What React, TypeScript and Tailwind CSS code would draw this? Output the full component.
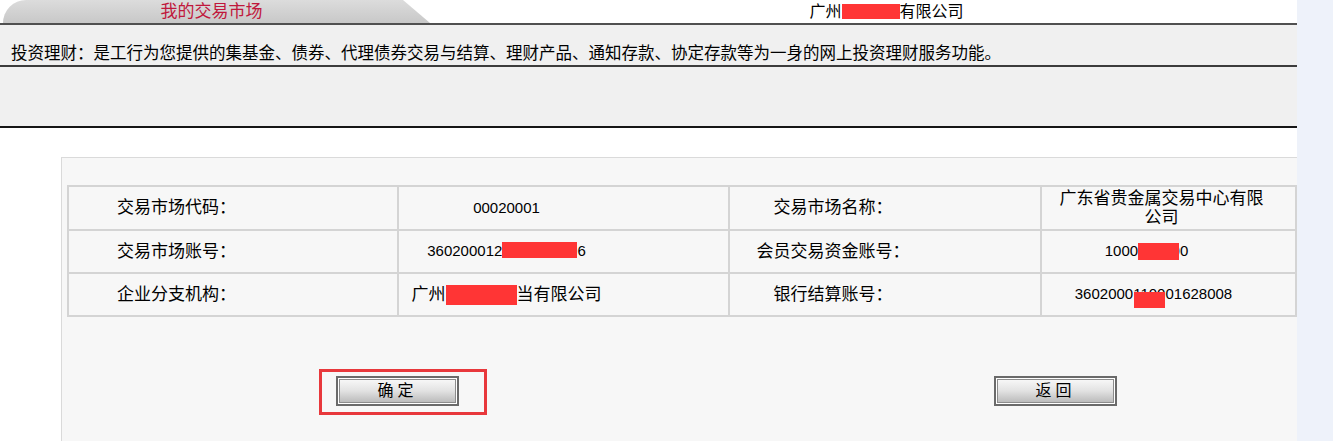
import React from "react";

const line = "border-[#d4d4d4]";

const Redact = ({ className }: { className: string }) => (
  <span className={`inline-block bg-[#ff3535] ${className}`} />
);

const Cell = ({ children, className = "" }: { children: React.ReactNode; className?: string }) => (
  <div className={`flex items-center border-r-2 border-b-2 ${line} ${className}`}>{children}</div>
);

const OldButton = ({ label }: { label: string }) => (
  <div className="w-[123px] h-[30px] border-2 border-[#6a6a6a] bg-white p-px">
    <div className="flex h-full items-center justify-center border border-[#8c8c8c] bg-linear-to-b from-[#f7f7f7] via-[#e2e2e2] to-[#bcbcbc] text-[16px] leading-none tracking-[4px] text-black">
      {label}
    </div>
  </div>
);

export default function App() {
  return (
    <div className="flex h-[441px] w-full overflow-hidden bg-[#eef2fa] font-['Liberation_Sans','Noto_Sans_CJK_SC',sans-serif] text-[17px] text-black">
      <div className="w-[1297px] shrink-0 bg-white">
        {/* tab bar */}
        <div className="flex h-[25px] border-b-2 border-[#505050]">
          <div className="ml-[3px] flex w-[427px] items-center justify-center rounded-tl-[26px] bg-linear-to-b from-[#dcdcdc] to-[#c8c8c8] pr-[10px] text-[17px] text-[#c0183c] [clip-path:polygon(0_0,400px_0,427px_100%,0_100%)]">
            我的交易市场
          </div>
          <div className="flex flex-1 items-center justify-center pl-[46px] text-[16px]">
            广州
            <Redact className="h-[15px] w-[58px]" />
            有限公司
          </div>
        </div>

        {/* description */}
        <div className="flex h-[42px] items-end border-b-2 border-[#3c3c3c] bg-[#f0f0f0] pb-[2px] pl-[11px] text-[16.5px] leading-[20px]">
          投资理财：是工行为您提供的集基金、债券、代理债券交易与结算、理财产品、通知存款、协定存款等为一身的网上投资理财服务功能。
        </div>
        <div className="h-[61px] border-b-2 border-[#161616] bg-[#f0f0f0]" />

        {/* panel */}
        <div className="ml-[61px] mt-[29px] border-l border-t border-[#dadada] bg-[#f7f7f7] pl-[5px] pt-[27px]">
          <div className={`grid grid-cols-[330px_331px_312px_1fr] border-l-2 border-t-2 ${line}`}>
            <Cell className="h-[44px] pl-[48px]">交易市场代码：</Cell>
            <Cell className="h-[44px] justify-center pr-[114px] text-[15px]">00020001</Cell>
            <Cell className="h-[44px] justify-center pr-[104px]">交易市场名称：</Cell>
            <Cell className="h-[44px] justify-center pl-[16px] pr-[30px] text-center leading-[19px]">
              广东省贵金属交易中心有限公司
            </Cell>

            <Cell className="h-[43px] pl-[48px]">交易市场账号：</Cell>
            <Cell className="h-[43px] justify-center pr-[114px] text-[15px]">
              360200012
              <span className="relative inline-block">
                000000000
                <span className="absolute inset-x-0 top-[2px] bottom-[5px] bg-[#ff3535]" />
              </span>
              6
            </Cell>
            <Cell className="h-[43px] justify-center pr-[104px]">会员交易资金账号：</Cell>
            <Cell className="h-[43px] justify-center pr-[44px] text-[15px]">
              1000
              <span className="relative inline-block">
                00000
                <span className="absolute left-0 right-[1px] top-[3px] bottom-[3px] bg-[#ff3535]" />
              </span>
              0
            </Cell>

            <Cell className="h-[43px] pl-[48px]">企业分支机构：</Cell>
            <Cell className="h-[43px] justify-center pr-[114px]">
              广州
              <Redact className="h-[20px] w-[71px]" />
              当有限公司
            </Cell>
            <Cell className="h-[43px] justify-center pr-[104px]">银行结算账号：</Cell>
            <Cell className="h-[43px] justify-center pr-[30px] text-[15px]">
              3602000
              <span className="relative inline-block">
                1100
                <span className="absolute left-[1px] right-0 top-[9px] h-[16px] bg-[#ff3535]" />
              </span>
              01628008
            </Cell>
          </div>

          {/* buttons */}
          <div className="mt-[59px] flex pb-[40px] pl-[269px]">
            <div className="relative">
              <div className="absolute -left-[17px] -top-[7px] h-[46px] w-[168px] border-[3px] border-[#e8383c]" />
              <OldButton label="确定" />
            </div>
            <div className="ml-[535px]">
              <OldButton label="返回" />
            </div>
          </div>
        </div>
      </div>
      <div className="flex-1" />
    </div>
  );
}
